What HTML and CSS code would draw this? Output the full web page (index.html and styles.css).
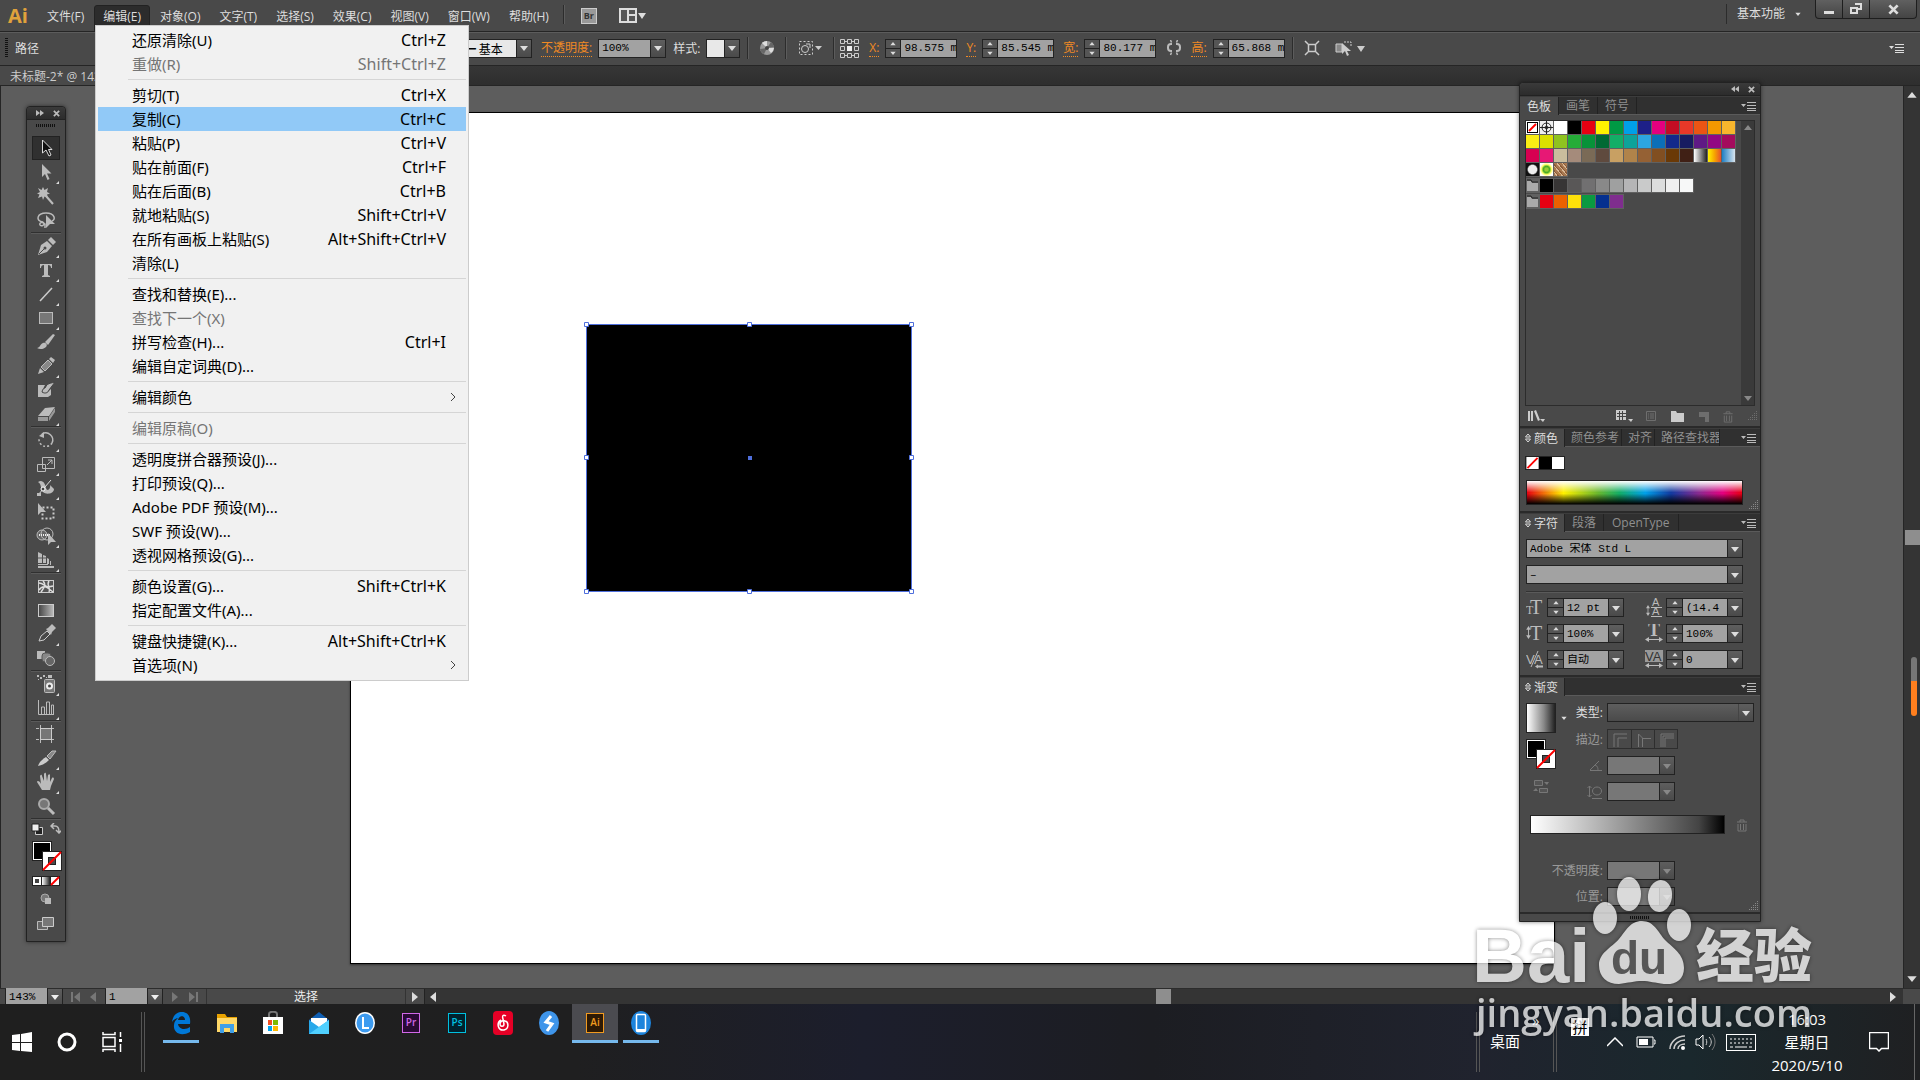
FILE: index.html
```html
<!DOCTYPE html>
<html lang="zh-CN">
<head>
    <meta charset="UTF-8">
    <meta name="viewport" content="width=device-width, initial-scale=1.0">
    <title>未标题-2 @ 143%</title>
    <link rel="stylesheet" href="styles.css">
</head>
<body>
    <svg class="sprite" aria-hidden="true">
        <symbol id="down" viewBox="0 0 8 6"><path d="M0 1h8L4 6z"/></symbol>
        <symbol id="up" viewBox="0 0 8 6"><path d="M0 5h8L4 0z"/></symbol>
        <symbol id="left" viewBox="0 0 8 10"><path d="M7 0v10L1 5z"/></symbol>
        <symbol id="right" viewBox="0 0 8 10"><path d="M1 0v10l6-5z"/></symbol>
        <symbol id="close" viewBox="0 0 8 8"><path d="M1 1l6 6M7 1L1 7" stroke="currentColor" stroke-width="2"/></symbol>
        <symbol id="flyout" viewBox="0 0 15 10"><path d="M0 3h5L2.500 6zM6 1h9v1H6zM6 4h9v1H6zM6 7h9v1H6zM6 9h9v1H6z"/></symbol>
        <symbol id="twirl" viewBox="0 0 6 10"><path d="M.5 4L3 1l2.500 3zM.5 6L3 9l2.500-3z" fill="none" stroke="currentColor"/></symbol>
        <symbol id="trash" viewBox="0 0 12 14"><path d="M1 4h10M4 4V2h4v2M2 6v7h8V6M4.500 6v6M7.500 6v6" fill="none" stroke="currentColor"/></symbol>
        <symbol id="grip" viewBox="0 0 10 10"><path d="M8 0h1v1H8zM6 2h1v1H6zM8 2h1v1H8zM4 4h1v1H4zM6 4h1v1H6zM8 4h1v1H8zM2 6h1v1H2zM4 6h1v1H4zM6 6h1v1H6zM8 6h1v1H8zM0 8h1v1H0zM2 8h1v1H2zM4 8h1v1H4zM6 8h1v1H6zM8 8h1v1H8z"/></symbol>
        <symbol id="across" viewBox="0 0 18 5"><path d="M0 2.500L4 0v2h10V0l4 2.500L14 5V3H4v2z"/></symbol>
        <symbol id="updown" viewBox="0 0 5 14"><path d="M2.500 0L5 4H3v6h2l-2.500 4L0 10h2V4H0z"/></symbol>
        <symbol id="fillstroke" viewBox="0 0 30 31">
            <rect width="20" height="20" fill="#222"/><rect x="1" y="1" width="18" height="18" fill="#fff"/><rect x="2" y="2" width="16" height="16" fill="#000"/>
            <rect x="10" y="10" width="20" height="20" fill="#222"/><rect x="11" y="11" width="18" height="18" fill="#fff"/>
            <rect x="16.500" y="16.500" width="7" height="7" fill="#494949" stroke="#222"/><path d="M11 29L29 11" stroke="#f00" stroke-width="2"/>
        </symbol>
        <symbol id="none" viewBox="0 0 13 13"><rect width="13" height="13" fill="#fff"/><path d="M1 12L12 1" stroke="#f00" stroke-width="2"/></symbol>
        <linearGradient id="gray"><stop offset="0" stop-color="#444"/><stop offset="1" stop-color="#bbb"/></linearGradient>
        <linearGradient id="white"><stop offset="0" stop-color="#fff"/><stop offset="1" stop-color="#222"/></linearGradient>
    </svg>

    <header class="menubar">
        <span class="logo">Ai</span>
        <nav class="menus">
            <button>文件(F)</button>
            <button class="open">编辑(E)</button>
            <button>对象(O)</button>
            <button>文字(T)</button>
            <button>选择(S)</button>
            <button>效果(C)</button>
            <button>视图(V)</button>
            <button>窗口(W)</button>
            <button>帮助(H)</button>
        </nav>
        <i class="divider"></i>
        <button class="bridge">Br</button>
        <button class="arrange" aria-label="排列文档">
            <svg width="28" height="16" viewBox="0 0 28 16"><path d="M1 1h16v13H1zM9 1v13M9 7h8" fill="#555" stroke="#ddd" stroke-width="2"/><path d="M19 5h8l-4 6z" fill="#ddd"/></svg>
        </button>
        <button class="workspace-name">基本功能 <svg width="6" height="4"><use href="#down"/></svg></button>
        <div class="window-buttons">
            <button aria-label="最小化"><svg width="10" height="12"><path d="M0 8h10v3H0z"/></svg></button>
            <button aria-label="还原"><svg width="12" height="12"><path d="M5 1h6v5H7M1 5h6v5H1z" fill="none" stroke="#ddd" stroke-width="2"/></svg></button>
            <button class="wide" aria-label="关闭"><svg width="11" height="11"><use href="#close"/></svg></button>
        </div>
    </header>

    <section class="control-bar">
        <div class="selection-kind"><i class="bar-grip"></i>路径</div>
        <span class="combo brush"><select aria-label="画笔定义"><option>━ 基本</option></select><svg><use href="#down"/></svg></span>
        <label class="link" for="opacity">不透明度:</label>
        <span class="combo percent"><select id="opacity"><option>100%</option></select><svg><use href="#down"/></svg></span>
        <label class="style-label" for="style">样式:</label>
        <span class="combo style"><select id="style"><option></option></select><svg><use href="#down"/></svg></span>
        <i class="divider"></i>
        <button class="icon" aria-label="重新着色图稿"><svg width="16" height="16" viewBox="0 0 16 16"><circle cx="8" cy="8" r="7" fill="#999"/><path d="M8 8L3 3A7 7 0 0 1 8 1zM8 8h7a7 7 0 0 1-3 5z" fill="#ddd"/><path d="M8 8L1 9a7 7 0 0 0 4 5zM8 8l4-6a7 7 0 0 1 3 5z" fill="#666"/><circle cx="8" cy="8" r="2" fill="#444"/></svg></button>
        <i class="divider"></i>
        <button class="icon align" aria-label="对齐"><svg width="24" height="16" viewBox="0 0 24 16"><rect x="1.500" y="1.500" width="13" height="13" fill="none" stroke="#ccc" stroke-dasharray="2 2"/><circle cx="7" cy="9" r="3.500" fill="none" stroke="#ccc"/><path d="M8 4h4v4" fill="none" stroke="#ccc"/><path d="M17 6h7l-3.500 4z" fill="#ccc"/></svg></button>
        <i class="divider"></i>
        <button class="icon ref-point" aria-label="参考点"><svg width="20" height="20" viewBox="0 0 20 20"><path d="M1.500 1.500h4v4h-4zM8.500 1.500h4v4h-4zM15.500 1.500h4v4h-4zM1.500 8.500h4v4h-4zM15.500 8.500h4v4h-4zM1.500 15.500h4v4h-4zM8.500 15.500h4v4h-4zM15.500 15.500h4v4h-4zM5 3.500h3M13 3.500h3M5 17.500h3M13 17.500h3" fill="none" stroke="#ccc"/><path d="M8 8h5v5H8z" fill="#eee"/></svg></button>
        <label class="link" for="px">X:</label>
        <span class="spin"><span class="steps"><button aria-label="增加"><svg><use href="#up"/></svg></button><button aria-label="减少"><svg><use href="#down"/></svg></button></span><input id="px" value="98.575 mm"></span>
        <label class="link" for="py">Y:</label>
        <span class="spin"><span class="steps"><button aria-label="增加"><svg><use href="#up"/></svg></button><button aria-label="减少"><svg><use href="#down"/></svg></button></span><input id="py" value="85.545 mm"></span>
        <label class="link" for="pw">宽:</label>
        <span class="spin"><span class="steps"><button aria-label="增加"><svg><use href="#up"/></svg></button><button aria-label="减少"><svg><use href="#down"/></svg></button></span><input id="pw" value="80.177 mm"></span>
        <button class="icon" aria-label="约束宽高比例"><svg width="16" height="16" viewBox="0 0 16 16"><path d="M6 4H5a3 3 0 0 0-3 3v1a3 3 0 0 0 3 3h1M10 4h1a3 3 0 0 1 3 3v1a3 3 0 0 1-3 3h-1" fill="none" stroke="#bbb" stroke-width="2"/><path d="M4.500 0l1 2.500M11.500 0l-1 2.500M4.500 15l1-2.500M11.500 15l-1-2.500" stroke="#bbb" stroke-width="1.500"/></svg></button>
        <label class="link" for="ph">高:</label>
        <span class="spin"><span class="steps"><button aria-label="增加"><svg><use href="#up"/></svg></button><button aria-label="减少"><svg><use href="#down"/></svg></button></span><input id="ph" value="65.868 mm"></span>
        <i class="divider"></i>
        <button class="icon" aria-label="隔离选中的对象"><svg width="16" height="16" viewBox="0 0 16 16"><path d="M4.500 4.500h7v7h-7zM1 1l3 3M15 1l-3 3M1 15l3-3M15 15l-3-3" fill="none" stroke="#ccc" stroke-width="1.500"/></svg></button>
        <button class="icon similar" aria-label="选择类似的对象"><svg width="30" height="16" viewBox="0 0 30 16"><path d="M1 4h6v8H1z" fill="#888" stroke="#ccc"/><path d="M9 2h7v5" fill="none" stroke="#ccc" stroke-dasharray="2 1"/><path d="M7 3v11l3-3 2 5 2-1-2-4h4z" fill="#ccc"/><path d="M22 6h8l-4 6z" fill="#ccc"/></svg></button>
        <button class="icon last" aria-label="控制面板菜单"><svg width="15" height="10"><use href="#flyout"/></svg></button>
    </section>

    <div class="doc-tabs"><a class="doc-tab" href="#">未标题-2* @ 143% (CMYK/预览)</a></div>

    <main class="workspace">
        <div class="canvas">
            <div class="artboard"></div>
            <svg class="shape" width="332" height="274" viewBox="0 0 332 274">
                <rect x="3.500" y="3.500" width="325" height="267" fill="#000" stroke="#4f6fdc"/>
                <path d="M1.500 1.500h4v4h-4zM164.500 1.500h4v4h-4zM326.500 1.500h4v4h-4zM1.500 134.500h4v4h-4zM326.500 134.500h4v4h-4zM1.500 268.500h4v4h-4zM164.500 268.500h4v4h-4zM326.500 268.500h4v4h-4z" fill="#fff" stroke="#4f6fdc"/>
                <rect x="165" y="135" width="4" height="4" fill="#4f6fdc"/>
            </svg>
        </div>
        <div class="vscroll">
            <svg width="10" height="7"><use href="#up"/></svg>
            <i class="thumb"></i>
            <svg width="10" height="7"><use href="#down"/></svg>
            <i class="edge-marker"></i>
        </div>

        <aside class="tools">
            <div class="float-head"><svg width="8" height="6" viewBox="0 0 8 6"><path d="M0 0v6l4-3zM4 0v6l4-3z"/></svg><svg width="7" height="7"><use href="#close"/></svg></div>
            <i class="dots"></i>
            <button class="tool active" aria-label="选择"><svg><path d="M6.500 2v13l3.500-3 3 6 2-1-2.500-5.500H16z" fill="#111" stroke="#ddd"/></svg></button>
            <button class="tool more" aria-label="直接选择"><svg><path d="M6 2v13l3-3 2.500 6 2-1-2.500-5.500h4.500z"/></svg></button>
            <button class="tool" aria-label="魔棒"><svg><path d="M7 1l1.500 3L12 2l-1 4 3 1.500-3 1L12 12 8.500 10.500 7 14 6 10.500 2 12l1.500-3.500L1 7.500 4 6 2 2l3.500 2z"/><path d="M10 10l7 8" stroke="#bbb" stroke-width="2"/></svg></button>
            <button class="tool" aria-label="套索"><svg><path d="M7 12c-8-1-6-9 3-9s10 7 6 8M7 12c3 3-2 5-3 3s2-4 5-1v4" fill="none" stroke="#bbb" stroke-width="1.500"/><path d="M10 5v13l4-4h5z"/></svg></button>
            <hr>
            <button class="tool more" aria-label="钢笔"><svg><path d="M2 19l3-10 6-4 5 5-5 6z"/><path d="M3 18l5-5" stroke="#494949"/><circle cx="9" cy="12" r="1.500" fill="#494949"/><path d="M12 4l3-3 5 5-3 3z"/></svg></button>
            <button class="tool more" aria-label="文字"><svg><path d="M4 4h12v4h-1c0-2-1-3-3-3v10l2 1v1H6v-1l2-1V5C6 5 5 6 5 8H4z"/></svg></button>
            <button class="tool more" aria-label="直线段"><svg><path d="M4 17L16 4" stroke="#ccc" stroke-width="1.500"/></svg></button>
            <button class="tool more" aria-label="矩形"><svg><rect x="3.500" y="4.500" width="13" height="11" fill="#777" stroke="#bbb"/></svg></button>
            <button class="tool" aria-label="画笔"><svg><path d="M1 16c3 0 3-4 6-5s5 2 3 4-6 3-9 1zM9 10l8-8 2 1-7 10z"/></svg></button>
            <button class="tool more" aria-label="铅笔"><svg><path d="M2 18l2-6 4 4z"/><path d="M5 11l7-7 4 4-7 7z" fill="#888" stroke="#bbb"/><path d="M13 3l2-2 4 3-2 3z"/></svg></button>
            <button class="tool" aria-label="斑点画笔"><svg><path d="M2 5h7l-3 6 4 2 5-4v6l-3 2H2z"/><path d="M6 12c1-5 4-3 4-6 2-3 6-3 9-4l-6 8c-1 3-4 4-7 2z" stroke="#444"/></svg></button>
            <button class="tool more" aria-label="橡皮擦"><svg><path d="M2 12l7-8 10-1-6 9z"/><path d="M2 13h10v4H2zM13 13l6-9v4l-6 9z" fill="#999"/></svg></button>
            <hr>
            <button class="tool more" aria-label="旋转"><svg><path d="M6 4a7 7 0 0 1 10 9" fill="none" stroke="#bbb" stroke-width="1.500"/><path d="M16 13a7 7 0 0 1-13-4" fill="none" stroke="#bbb" stroke-width="1.500" stroke-dasharray="2 2"/><path d="M3 6l5-4v6z"/></svg></button>
            <button class="tool more" aria-label="比例缩放"><svg><path d="M6.500 3.500h12v11h-12zM1.500 10.500h8v7h-8zM11 11l5-5M12 6h4v4" fill="none" stroke="#bbb"/></svg></button>
            <button class="tool more" aria-label="宽度"><svg><path d="M2 4c5-3 7 2 8 6s5 1 4-3l4 4c0 5-8 6-11 3S6 6 2 4z"/><path d="M2 17L15 2" stroke="#ddd"/><circle cx="7" cy="11" r="2" fill="#444" stroke="#fff"/><path d="M1 15h4v3H1z"/></svg></button>
            <button class="tool" aria-label="自由变换"><svg><rect x="6.500" y="5.500" width="11" height="11" fill="none" stroke="#ccc" stroke-width="2" stroke-dasharray="2 2"/><path d="M2 1v12l3-3h5z"/></svg></button>
            <button class="tool more" aria-label="形状生成器"><svg><circle cx="6" cy="9" r="5" fill="#666" stroke="#bbb"/><circle cx="11" cy="8" r="6" fill="none" stroke="#bbb"/><path d="M3 9h12" stroke="#eee" stroke-width="2" stroke-dasharray="1 1"/><path d="M12 7v12l3-3h5z"/></svg></button>
            <button class="tool more" aria-label="透视网格"><svg><path d="M2 2l4 2v9H2zM7 5l3 1v7H7zM2 14h10v1H2zM11 8l2 1v5h-2zM2 16h16v2H2zM14 11h1v4h-1z"/><path d="M2 8h9" stroke="#555"/></svg></button>
            <hr>
            <button class="tool" aria-label="网格"><svg><rect x="2.500" y="4.500" width="15" height="12" fill="#555" stroke="#ccc"/><path d="M3 7c6 0 5 6 14 3M3 14c4-6 8-3 14 2M7 5c4 4 0 8-2 11M13 5c-3 4 2 7 0 11" fill="none" stroke="#ddd" stroke-width="1.500"/></svg></button>
            <button class="tool" aria-label="渐变"><svg><rect x="2.500" y="4.500" width="15" height="12" fill="url(#gray)" stroke="#ccc"/></svg></button>
            <button class="tool more" aria-label="吸管"><svg><path d="M3 17l2-5 6-5 3 3-6 6z" fill="none" stroke="#ccc"/><path d="M10 5l2-1 4-4 4 4-4 4-1 3z"/></svg></button>
            <button class="tool" aria-label="混合"><svg><path d="M1 3h8v8H1z"/><rect x="6" y="5" width="9" height="9" rx="3" fill="#888" stroke="#555"/><circle cx="14" cy="13" r="4.500" fill="#666" stroke="#bbb"/></svg></button>
            <hr>
            <button class="tool more" aria-label="符号喷枪"><svg><path d="M1 1h2v2H1zM4 3h2v2H4zM7 1h2v2H7zM10 3h1v1h-1zM2 5h1v1H2zM12 1h4v3h-4z"/><rect x="8.500" y="5.500" width="10" height="13" rx="1" fill="#777" stroke="#bbb"/><circle cx="13.500" cy="12" r="2.500" fill="#444" stroke="#eee" stroke-width="2"/></svg></button>
            <button class="tool more" aria-label="柱形图"><svg><path d="M2.500 2v14.500H18M5.500 16V9h3v7M10.500 16V4h3v12M15.500 16V7h2v9" fill="none" stroke="#bbb"/></svg></button>
            <hr>
            <button class="tool" aria-label="画板"><svg><path d="M4.500 1v18M15.500 1v18M0 4.500h20M0 15.500h20" stroke="#bbb" stroke-dasharray="3 2 8 2"/><rect x="4.500" y="4.500" width="11" height="11" fill="#777" stroke="#ccc"/></svg></button>
            <button class="tool more" aria-label="切片"><svg><path d="M2 18c1-4 5-7 8-9l3 3c-3 3-6 5-11 6z" fill="#ccc"/><path d="M11 8l5-5h4l-6 8z" fill="#888" stroke="#bbb"/></svg></button>
            <button class="tool more" aria-label="抓手"><svg><path d="M6 18L1 10c0-2 3-1 4 2L4 4c1-2 2-1 2 0l2 5V2c1-2 2-1 2 0l1 7 1-6c1-1 2-1 2 0v7l2-4c1-1 2 0 2 1l-3 7-1 4z"/></svg></button>
            <button class="tool" aria-label="缩放"><svg><circle cx="8" cy="8" r="5" fill="#777" stroke="#aaa" stroke-width="2"/><path d="M12 12l6 6" stroke="#bbb" stroke-width="3"/></svg></button>
            <hr>
            <div class="swap"><svg width="12" height="12"><path d="M4.500 4.500h7v7h-7z" fill="#222" stroke="#ccc"/><path d="M1 1h7v7H1z" fill="#eee" stroke="#222"/></svg><svg width="11" height="11"><path d="M2 3h3c3 0 4 2 4 6M4 0L1 3l3 3M6 7l3 3 3-3" fill="none" stroke="#bbb" stroke-width="1.500"/></svg></div>
            <svg class="fill-box" width="30" height="31"><use href="#fillstroke"/></svg>
            <svg class="modes" width="28" height="10"><path d="M0 0h28v10H0z" fill="#222"/><path d="M1 1h8v8H1zM19 1h8v8h-8z" fill="#fff"/><path d="M3 3h4v4H3z" fill="#444"/><path d="M10 1h8v8h-8z" fill="url(#white)"/><path d="M19 9l8-8" stroke="#f00" stroke-width="2"/></svg>
            <button class="tool" aria-label="绘图模式"><svg><circle cx="9" cy="9" r="4" fill="#777" stroke="#aaa"/><path d="M9 9h6v6H9z" fill="#bbb"/></svg></button>
            <button class="tool" aria-label="更改屏幕模式"><svg><path d="M1.500 8.500h10v8h-10z" fill="#666" stroke="#bbb"/><path d="M6.500 4.500h11v9h-11z" fill="#777" stroke="#ccc"/></svg></button>
        </aside>

        <aside class="dock">
            <div class="float-head"><svg width="8" height="6" viewBox="0 0 8 6"><path d="M4 0v6L0 3zM8 0v6L4 3z"/></svg><svg width="7" height="7"><use href="#close"/></svg></div>

            <section class="panel">
                <div class="tabs"><button class="on">色板</button><button>画笔</button><button>符号</button><svg width="15" height="10"><use href="#flyout"/></svg></div>
                <div class="swatch-box">
                    <div class="swatch-list" id="swatches"></div>
                    <div class="mini-scroll"><svg width="8" height="6"><use href="#up"/></svg><svg width="8" height="6"><use href="#down"/></svg></div>
                </div>
                <div class="swatch-foot">
                    <svg class="lit" width="18" height="12"><path d="M0 1h2v10H0zM3 1h2v10H3zM6 1l2-1 4 10-2 1zM12 9h5l-2 3z"/></svg>
                    <svg class="lit push" width="17" height="12"><path d="M0 0h10v10H0z"/><path d="M1 3.500h9M1 6.500h9M3.500 1v9M6.500 1v9" stroke="#444"/><path d="M12 9h5l-2 3z"/></svg>
                    <svg width="11" height="11"><path d="M.5.500h9v9h-9zM2 3h1M4 3h4M2 5h1M4 5h4M2 7h1M4 7h4" fill="none" stroke="currentColor"/></svg>
                    <svg class="lit" width="13" height="11"><path d="M0 0h5l1 2h7v9H0z"/></svg>
                    <svg width="11" height="11"><path d="M1 1h10v10H7V6H1z"/></svg>
                    <svg width="12" height="13"><use href="#trash"/></svg>
                    <svg width="10" height="10"><use href="#grip"/></svg>
                </div>
            </section>

            <section class="panel">
                <div class="tabs tight"><button class="on"><svg width="6" height="10"><use href="#twirl"/></svg>颜色</button><button>颜色参考</button><button>对齐</button><button class="cut">路径查找器</button><svg width="15" height="10"><use href="#flyout"/></svg></div>
                <div class="color-body">
                    <div class="bw"><svg width="13" height="12"><use href="#none"/></svg><i class="black"></i><i class="white"></i></div>
                    <div class="spectrum"></div>
                    <svg class="corner" width="10" height="10"><use href="#grip"/></svg>
                </div>
            </section>

            <section class="panel">
                <div class="tabs"><button class="on twirl"><svg width="6" height="10"><use href="#twirl"/></svg>字符</button><button>段落</button><button class="roomy">OpenType</button><svg width="15" height="10"><use href="#flyout"/></svg></div>
                <div class="char-body">
                    <span class="combo full"><select aria-label="字体系列"><option>Adobe 宋体 Std L</option></select><svg><use href="#down"/></svg></span>
                    <span class="combo full"><select aria-label="字体样式"><option>–</option></select><svg><use href="#down"/></svg></span>
                    <hr>
                    <div class="char-grid">
                        <div class="char-field"><svg class="glyph"><text class="serif small" x="0" y="16">T</text><text class="serif" x="4" y="16">T</text></svg><span class="steps"><button aria-label="增加"><svg><use href="#up"/></svg></button><button aria-label="减少"><svg><use href="#down"/></svg></button></span><span class="combo"><select aria-label="字体大小"><option>12 pt</option></select><svg><use href="#down"/></svg></span></div>
                        <div class="char-field"><svg class="glyph"><use href="#updown" x="1" y="7" width="4" height="11"/><text class="sans" x="7" y="8">A</text><text class="sans" x="7" y="17">A</text><path d="M6 9h11v1H6zM6 18h11v1H6z"/></svg><span class="steps"><button aria-label="增加"><svg><use href="#up"/></svg></button><button aria-label="减少"><svg><use href="#down"/></svg></button></span><span class="combo"><select aria-label="行距"><option>(14.4</option></select><svg><use href="#down"/></svg></span></div>
                        <div class="char-field"><svg class="glyph"><use href="#updown" x="0" y="2" width="5" height="13"/><text class="serif" x="4" y="16">T</text></svg><span class="steps"><button aria-label="增加"><svg><use href="#up"/></svg></button><button aria-label="减少"><svg><use href="#down"/></svg></button></span><span class="combo"><select aria-label="垂直缩放"><option>100%</option></select><svg><use href="#down"/></svg></span></div>
                        <div class="char-field"><svg class="glyph"><text class="serif heavy" x="3" y="12">T</text><use href="#across" x="0" y="13" width="18" height="5"/></svg><span class="steps"><button aria-label="增加"><svg><use href="#up"/></svg></button><button aria-label="减少"><svg><use href="#down"/></svg></button></span><span class="combo"><select aria-label="水平缩放"><option>100%</option></select><svg><use href="#down"/></svg></span></div>
                        <div class="char-field"><svg class="glyph"><text class="sans big" x="0" y="14">V</text><text class="sans big" x="8" y="14">A</text><path d="M5 17L12 1" stroke="currentColor"/><path d="M9 16.500l3-2v1h5v2h-5v1z"/></svg><span class="steps"><button aria-label="增加"><svg><use href="#up"/></svg></button><button aria-label="减少"><svg><use href="#down"/></svg></button></span><span class="combo"><select aria-label="字距微调"><option>自动</option></select><svg><use href="#down"/></svg></span></div>
                        <div class="char-field"><svg class="glyph"><path d="M0 0h18v12H0z" fill="#999"/><text class="sans big dark" x="0" y="11">VA</text><use href="#across" x="0" y="13" width="18" height="5"/></svg><span class="steps"><button aria-label="增加"><svg><use href="#up"/></svg></button><button aria-label="减少"><svg><use href="#down"/></svg></button></span><span class="combo"><select aria-label="字距调整"><option>0</option></select><svg><use href="#down"/></svg></span></div>
                    </div>
                </div>
            </section>

            <section class="panel">
                <div class="tabs"><button class="on twirl"><svg width="6" height="10"><use href="#twirl"/></svg>渐变</button><svg width="15" height="10"><use href="#flyout"/></svg></div>
                <div class="grad-body">
                    <div class="grad-left">
                        <div class="grad-swatch"></div>
                        <svg width="30" height="31"><use href="#fillstroke"/></svg>
                        <svg class="reverse" width="16" height="14"><path d="M1.500.500h8v5h-8zM6.500 8.500h8v4h-8z" fill="#555" stroke="#777"/><path d="M11 2h5l-2 3zM0 11h5L3 8z" fill="#777"/></svg>
                    </div>
                    <svg class="grad-arrow" width="6" height="4"><use href="#down"/></svg>
                    <div class="grad-fields">
                        <label for="gtype">类型:</label><span class="combo flat"><select id="gtype"><option></option></select><svg><use href="#down"/></svg></span>
                        <span class="dim">描边:</span><div class="stroke-buttons">
                            <button disabled aria-label="在描边中应用渐变"><svg width="16" height="15"><path d="M3 15V2h13M7 15V6h9" fill="none" stroke="#777"/></svg></button>
                            <button disabled aria-label="沿描边应用渐变"><svg width="16" height="15"><path d="M3.500 15V2l4 4v9M7.500 6.500H16" fill="none" stroke="#777"/></svg></button>
                            <button disabled aria-label="跨描边应用渐变"><svg width="16" height="15"><path d="M3 15V2h13M5 15V4h11M7 15V6h9" fill="none" stroke="#777"/></svg></button>
                        </div>
                        <svg class="field-icon" width="14" height="12"><path d="M1 10.500h12M1 10l9-9M6 5c3 1 3 4 3 5" fill="none" stroke="currentColor"/></svg><span class="combo off"><select disabled aria-label="角度"><option></option></select><svg><use href="#down"/></svg></span>
                        <svg class="field-icon" width="16" height="14"><path d="M2.500 1v11M.5 3l2-2 2 2M.5 10l2 2 2-2M5 13.500h10" fill="none" stroke="currentColor"/><ellipse cx="10" cy="6" rx="4.500" ry="4" fill="none" stroke="currentColor"/></svg><span class="combo off"><select disabled aria-label="长宽比"><option></option></select><svg><use href="#down"/></svg></span>
                    </div>
                </div>
                <div class="ramp-row"><div class="ramp"></div><svg width="12" height="14"><use href="#trash"/></svg></div>
                <div class="grad-fields lower">
                    <label class="dim" for="gop">不透明度:</label><span class="combo off"><select id="gop" disabled><option></option></select><svg><use href="#down"/></svg></span>
                    <label class="dim" for="gpos">位置:</label><span class="combo off"><select id="gpos" disabled><option></option></select><svg><use href="#down"/></svg></span>
                </div>
                <svg class="corner" width="10" height="10"><use href="#grip"/></svg>
            </section>
            <div class="dock-foot"><i class="dots"></i></div>
        </aside>
    </main>

    <footer class="status">
        <span class="combo zoom"><select aria-label="缩放级别"><option>143%</option></select><svg><use href="#down"/></svg></span>
        <button disabled aria-label="首项"><svg width="9" height="10"><path d="M0 0h2v10H0zM9 0v10L3 5z"/></svg></button>
        <button disabled aria-label="上一项"><svg width="8" height="10"><use href="#left"/></svg></button>
        <span class="combo page"><select aria-label="画板导航"><option>1</option></select><svg><use href="#down"/></svg></span>
        <button disabled aria-label="下一项"><svg width="8" height="10"><use href="#right"/></svg></button>
        <button disabled aria-label="末项"><svg width="9" height="10"><path d="M7 0h2v10H7zM0 0v10l6-5z"/></svg></button>
        <span class="status-text">选择</span>
        <button class="lit" aria-label="状态菜单"><svg width="8" height="10"><use href="#right"/></svg></button>
        <div class="hscroll"><svg width="8" height="10"><use href="#left"/></svg><i class="thumb"></i><svg width="8" height="10"><use href="#right"/></svg></div>
        <i class="scroll-corner"></i>
    </footer>

    <div class="taskbar">
        <button class="sys" aria-label="开始"><svg width="20" height="20"><path d="M0 3l8-1v8H0zM9 2l11-2v10H9zM0 11h8v8l-8-1zM9 11h11v9L9 19z" fill="#fff"/></svg></button>
        <button class="sys" aria-label="Cortana"><svg width="20" height="20"><circle cx="10" cy="10" r="8" fill="none" stroke="#fff" stroke-width="3"/></svg></button>
        <button class="sys" aria-label="任务视图"><svg width="20" height="20"><path d="M1 5.500h12v9H1zM1 0v2.500h12V0M1 20v-2.500h12V20M18.500 0v5M18.500 12v8" fill="none" stroke="#fff" stroke-width="1.500"/><path d="M17 7h3v3h-3z" fill="#fff"/></svg></button>
        <i class="rails"></i>
        <nav class="apps">
            <button class="running" aria-label="Edge"><svg width="20" height="24" viewBox="0 0 20 24"><path d="M1 11C2 4 6 1 11 1c6 0 9 5 8 12H7c1 6 8 6 12 3v5C10 26 2 22 3 14c0-3 2-6 5-7C5 7 2 9 1 11zM7 9h7c0-5-6-5-7 0z" fill="#0078d7"/></svg></button>
            <button aria-label="文件资源管理器"><svg width="20" height="20"><path d="M0 1h8l2 3h10v15H0z" fill="#e8a200"/><path d="M0 5h20v14H0z" fill="#ffd868"/><path d="M3 20v-9h14v9h-4v-5H7v5z" fill="#3f9fe8"/></svg></button>
            <button aria-label="Microsoft Store"><svg width="20" height="24"><path d="M6 7V3c0-3 8-3 8 0v4" fill="none" stroke="#777" stroke-width="2"/><path d="M0 6h20v17H0z" fill="#fff"/><path d="M5 9h4v5H5z" fill="#f25022"/><path d="M10 9h5v5h-5z" fill="#7fba00"/><path d="M5 15h4v5H5z" fill="#00a4ef"/><path d="M10 15h5v5h-5z" fill="#ffb900"/></svg></button>
            <button aria-label="邮件"><svg width="20" height="22"><path d="M0 8l10-8 10 8v14H0z" fill="#0f5fb4"/><path d="M2 6h16v9H2z" fill="#fff"/><path d="M0 8l10 7 10-7v14H0z" fill="#28a8ea"/><path d="M0 22L20 8v14z" fill="#50d0ff"/></svg></button>
            <button aria-label="鲁大师"><svg width="20" height="24"><ellipse cx="10" cy="12" rx="10" ry="11" fill="#fff"/><ellipse cx="10" cy="12" rx="8.500" ry="9.500" fill="#3d9bf0"/><path d="M8 6v11h6" fill="none" stroke="#fff" stroke-width="2"/></svg></button>
            <button aria-label="Premiere"><span class="adobe pr">Pr</span></button>
            <button aria-label="Photoshop"><span class="adobe ps">Ps</span></button>
            <button aria-label="网易云音乐"><svg width="20" height="24"><rect width="20" height="24" rx="4" fill="#e60026"/><path d="M13 5c-3-2-4 0-3 3l1 5c0 3-4 3-4 0s3-4 5-3c4 1 4 8-1 9-6 1-8-7-3-10" fill="none" stroke="#fff" stroke-width="1.500"/></svg></button>
            <button aria-label="浏览器"><svg width="20" height="24"><ellipse cx="10" cy="12" rx="10" ry="12" fill="#3f95ea"/><path d="M12 5l-5 6 6 2-5 7" fill="none" stroke="#fff" stroke-width="3"/></svg></button>
            <button class="running current" aria-label="Illustrator"><span class="adobe ai">Ai</span></button>
            <button class="running" aria-label="手机助手"><svg width="20" height="24"><ellipse cx="10" cy="12" rx="10" ry="12" fill="#1d84dc"/><rect x="5.500" y="3.500" width="9" height="17" rx="1" fill="none" stroke="#fff" stroke-width="1.500"/><path d="M5 18h10v2H5z" fill="#fff"/></svg></button>
        </nav>
        <div class="tray">
            <i class="rails"></i>
            <div class="desktop-bar"><span class="chev">»</span><span>桌面</span></div>
            <i class="rails"></i>
            <span class="ime">拼</span>
            <svg width="16" height="10"><path d="M0 9l8-8 8 8" fill="none" stroke="#fff" stroke-width="1.500"/></svg>
            <svg class="battery" width="20" height="12"><path d="M1 1h16v10H1zM18 4h1v4h-1" fill="none" stroke="#fff"/><path d="M3 3h9v6H3z" fill="#fff"/></svg>
            <svg class="wifi" width="16" height="15"><path d="M1 14C1 7 8 1 16 1M5 14c0-5 5-9 11-9M9 14c0-3 3-5 7-5" fill="none" stroke="#ccc" stroke-width="1.500"/><circle cx="14" cy="13" r="2" fill="#fff"/></svg>
            <svg class="sound" width="21" height="18"><path d="M1 6h3l4-4v14l-4-4H1z" fill="none" stroke="#fff"/><path d="M11 6c1 2 1 4 0 6M14 4c3 3 3 7 0 10" fill="none" stroke="#ccc"/><path d="M17 1c4 5 4 11 0 16" fill="none" stroke="#777"/></svg>
            <svg width="30" height="17"><rect x=".5" y=".5" width="29" height="16" fill="none" stroke="#fff"/><path d="M4 5h22M4 9h22" stroke="#fff" stroke-dasharray="2 2"/><path d="M4 13h3M9 13h12M23 13h3" stroke="#fff"/></svg>
            <time class="clock">16:03<br>星期日<br>2020/5/10</time>
            <svg class="note" width="20" height="20"><path d="M.5.500h19v16h-7L10 19l-2.500-2.500h-7z" fill="none" stroke="#fff" stroke-width="1.500"/></svg>
            <i class="peek"></i>
        </div>
    </div>

    <svg class="watermark" width="350" height="170" viewBox="0 0 350 170">
        <text class="wm-latin" x="2" y="112">Bai</text>
        <ellipse cx="135" cy="48" rx="12" ry="16"/>
        <ellipse cx="159" cy="24" rx="12" ry="17"/>
        <ellipse cx="190" cy="26" rx="12" ry="16" transform="rotate(8 190 26)"/>
        <ellipse cx="209" cy="55" rx="12" ry="16"/>
        <path d="M172 51c12 0 16 11 23 19 8 8 19 14 19 28 0 12-9 17-20 16-9-1-14-3-22-3s-14 2-23 3c-12 0-20-7-20-19s12-17 20-26c7-8 11-18 23-18z"/>
        <text class="wm-du" x="141" y="104">du</text>
        <text class="wm-cjk" x="226" y="107">经验</text>
        <text class="wm-url" x="6" y="157">jingyan.baidu.com</text>
    </svg>

    <div class="dropdown" role="menu">
        <button>还原清除(U)<kbd>Ctrl+Z</kbd></button>
        <button disabled>重做(R)<kbd>Shift+Ctrl+Z</kbd></button>
        <hr>
        <button>剪切(T)<kbd>Ctrl+X</kbd></button>
        <button class="hot">复制(C)<kbd>Ctrl+C</kbd></button>
        <button>粘贴(P)<kbd>Ctrl+V</kbd></button>
        <button>贴在前面(F)<kbd>Ctrl+F</kbd></button>
        <button>贴在后面(B)<kbd>Ctrl+B</kbd></button>
        <button>就地粘贴(S)<kbd>Shift+Ctrl+V</kbd></button>
        <button>在所有画板上粘贴(S)<kbd>Alt+Shift+Ctrl+V</kbd></button>
        <button>清除(L)</button>
        <hr>
        <button>查找和替换(E)...</button>
        <button disabled>查找下一个(X)</button>
        <button>拼写检查(H)...<kbd>Ctrl+I</kbd></button>
        <button>编辑自定词典(D)...</button>
        <hr>
        <button class="sub">编辑颜色<svg width="6" height="10"><path d="M1 1l4 4-4 4"/></svg></button>
        <hr>
        <button disabled>编辑原稿(O)</button>
        <hr>
        <button>透明度拼合器预设(J)...</button>
        <button>打印预设(Q)...</button>
        <button>Adobe PDF 预设(M)...</button>
        <button>SWF 预设(W)...</button>
        <button>透视网格预设(G)...</button>
        <hr>
        <button>颜色设置(G)...<kbd>Shift+Ctrl+K</kbd></button>
        <button>指定配置文件(A)...</button>
        <hr>
        <button>键盘快捷键(K)...<kbd>Alt+Shift+Ctrl+K</kbd></button>
        <button class="sub">首选项(N)<svg width="6" height="10"><path d="M1 1l4 4-4 4"/></svg></button>
    </div>

    <script>
        const noneIcon = '<svg width="13" height="13"><rect width="13" height="13" fill="#fff"/><rect x="1.500" y="1.500" width="10" height="10" fill="#fff" stroke="#000"/><path d="M3 10L10 3" stroke="#f00" stroke-width="2"/></svg>';
        const regIcon = '<svg width="13" height="13"><rect width="13" height="13" fill="#eee"/><circle cx="6.500" cy="6.500" r="4.500" fill="none" stroke="#222"/><circle cx="6.500" cy="6.500" r="1.500" fill="none" stroke="#222"/><path d="M6.500 0v13M0 6.500h13" stroke="#222"/></svg>';
        const folderIcon = '<svg width="13" height="13"><path d="M1 2h4l1 2h6v8H1z" fill="#aaa"/><path d="M1 1h4l1 2h6" fill="none" stroke="#222"/></svg>';

        const rows = [
            [noneIcon, regIcon, '#fff', '#000', '#e60012', '#fff100', '#009944', '#00a0e9', '#1d2088', '#e4007f', '#c30d23', '#e83828', '#ea5514', '#f39800', '#f8b62d'],
            ['#f9ed14', '#dbe000', '#8fc31f', '#25ac38', '#079239', '#006934', '#13ae67', '#0da39a', '#2ca6e0', '#0b6fb8', '#13298b', '#171c61', '#5f1985', '#920783', '#a40b5d'],
            ['#d70051', '#e71875', '#cabd9d', '#a58b7b', '#7a6a56', '#5f4a3e', '#c8a063', '#b0834a', '#956134', '#814f21', '#6a3906', '#402015', 'linear-gradient(90deg, #fff, #222)', 'linear-gradient(90deg, #fff100, #f6a500, #e8502a)', 'linear-gradient(90deg, #1d7fc4, #d8e4ee)'],
            ['radial-gradient(circle, #eee 45%, #111 60%)', 'radial-gradient(circle, #9c3 15%, #4a2 35%, #ff6 55%, #fff 75%)', 'repeating-linear-gradient(50deg, #a87850 0 2px, #d9b896 2px 3px, #8a5a38 3px 4px)']
        ];
        const groups = [
            [folderIcon, '#000', '#373535', '#595757', '#717071', '#898989', '#9fa0a0', '#b5b5b6', '#c9caca', '#dcdddd', '#efefef', '#f7f8f8'],
            [folderIcon, '#e60012', '#eb6100', '#fde00a', '#0a9a41', '#05308f', '#7f2d8e']
        ];

        function addRow(cells, cls) {
            const row = document.createElement('div');
            row.className = cls;
            for (const c of cells) {
                const b = document.createElement('button');
                b.setAttribute('aria-label', '色板');
                if (c.startsWith('<svg')) b.innerHTML = c;
                else b.style.background = c;
                row.appendChild(b);
            }
            document.getElementById('swatches').appendChild(row);
        }
        rows.forEach(r => addRow(r, 'swatch-row'));
        groups.forEach(r => addRow(r, 'swatch-row group'));
    </script>
</body>
</html>
```

FILE: styles.css
```css
*{
    box-sizing:border-box;
}
body{
    margin:0;
    height:100vh;
    display:flex;
    flex-direction:column;
    overflow:hidden;
    position:relative;
    background:#5d5d5d;
    color:#ddd;
    font-family:"Open Sans","Noto Sans CJK SC",sans-serif;
    font-size:12px;
}
button,input,select{
    font:inherit;
    color:inherit;
    border:0;
    padding:0;
    margin:0;
    background:none;
    border-radius:0;
    appearance:none;
    outline:0;
}
svg{
    display:block;
    flex:none;
    fill:currentColor;
}
.sprite{
    position:absolute;
    width:0;
    height:0;
}
.divider{
    width:2px;
    border-left:1px solid #2c2c2c;
    border-right:1px solid #5c5c5c;
    align-self:stretch;
    margin:4px 0;
}

/* menu bar */
.menubar{
    display:flex;
    height:32px;
    flex:none;
    align-items:center;
    background:#494949;
    border-bottom:1px solid #252525;
}
.logo{
    font-family:"Open Sans",sans-serif;
    font-weight:700;
    font-size:20px;
    line-height:28px;
    color:#e0a23c;
    width:38px;
    padding-left:8px;
}
.menus{
    display:flex;
    gap:1px;
    height:26px;
    align-self:flex-end;
}
.menus button{
    padding:0 8px 2px;
    line-height:20px;
    border:1px solid transparent;
}
.menus .open{
    background:#2c2c2c;
    border-color:#222;
    border-radius:3px 3px 0 0;
}
.menubar .divider{
    margin:5px 16px 7px 5px;
}
.bridge{
    width:16px;
    height:16px;
    background:#999;
    border:1px solid #ccc;
    color:#333;
    font-size:9px;
    font-weight:700;
    line-height:14px;
}
.arrange{
    margin-left:22px;
}
.workspace-name{
    display:flex;
    align-items:center;
    gap:10px;
    margin-left:auto;
    margin-right:14px;
    padding-left:10px;
    border-left:1px solid #2c2c2c;
    line-height:20px;
    margin-bottom:3px;
}
.window-buttons{
    display:flex;
    align-self:flex-start;
    height:19px;
    margin-right:3px;
    border:1px solid #1e1e1e;
    border-top:0;
    border-radius:0 0 4px 4px;
    background:linear-gradient(#606060,#444);
}
.window-buttons button{
    width:27px;
    display:flex;
    align-items:center;
    justify-content:center;
    border-right:1px solid #1e1e1e;
}
.window-buttons .wide{
    width:46px;
    border:0;
}

/* control bar */
.control-bar{
    display:flex;
    flex:none;
    height:34px;
    align-items:center;
    padding-bottom:2px;
    background:#494949;
    border-top:1px solid #5c5c5c;
    border-bottom:1px solid #252525;
}
.selection-kind{
    display:flex;
    align-items:center;
    gap:7px;
    width:460px;
    padding-left:5px;
}
.bar-grip{
    width:3px;
    height:20px;
    background:repeating-linear-gradient(#111 0 1px,#494949 1px 2px);
}
.combo{
    display:flex;
    align-items:center;
    height:19px;
    border:1px solid #222;
    background:linear-gradient(#5e5e5e,#4a4a4a);
}
.combo select{
    flex:1;
    min-width:0;
    height:17px;
    padding:0 3px;
    background:#a2a2a2;
    border-right:1px solid #222;
    color:#000;
    opacity:1;
    font-family:"Liberation Mono","Noto Sans CJK SC",monospace;
    font-size:11px;
}
.combo svg{
    width:8px;
    height:6px;
    margin:0 3px;
}
.brush{
    width:72px;
}
.brush select{
    background:#e8e8e8;
    font-family:"Noto Sans CJK SC",sans-serif;
    font-size:12px;
}
.link{
    color:#f08a24;
    border-bottom:1px dotted #f08a24;
    line-height:16px;
    margin:0 6px 0 9px;
}
.percent{
    width:68px;
}
.style-label{
    margin:0 6px 0 7px;
}
.style{
    width:34px;
    margin-right:7px;
}
.style select{
    background:#e8e8e8;
}
.icon{
    margin:0 10px;
}
.align{
    margin:0 11px;
}
.ref-point{
    margin:0 11px 0 4px;
}
.control-bar .icon + .link{
    margin-left:-1px;
}
.spin{
    display:flex;
    height:19px;
    width:72px;
    border:1px solid #222;
}
.spin + .divider{
    margin-left:7px;
}
.spin input{
    flex:1;
    min-width:0;
    padding-left:3px;
    background:#a2a2a2;
    color:#000;
    font-family:"Liberation Mono",monospace;
    font-size:11px;
}
.steps{
    display:flex;
    flex-direction:column;
    width:15px;
    border-right:1px solid #222;
}
.steps button{
    flex:1;
    display:flex;
    align-items:center;
    justify-content:center;
    background:#555;
}
.steps button + button{
    border-top:1px solid #222;
}
.steps svg{
    width:6px;
    height:4px;
}
.similar{
    margin:0 5px;
}
.last{
    margin-left:auto;
    margin-right:16px;
}

/* document tab strip */
.doc-tabs{
    display:flex;
    flex:none;
    height:20px;
    background:linear-gradient(#363636,#2e2e2e);
    border-bottom:1px solid #252525;
}
.doc-tab{
    padding:0 10px;
    background:#494949;
    color:#ccc;
    text-decoration:none;
    line-height:22px;
}

/* canvas */
.workspace{
    flex:1;
    min-height:0;
    display:flex;
    position:relative;
}
.canvas{
    flex:1;
    position:relative;
    overflow:hidden;
    border-left:1px solid #252525;
}
.artboard{
    position:absolute;
    left:349px;
    top:26px;
    width:1205px;
    height:852px;
    background:#fff;
    border:1px solid #000;
    box-shadow:0 1px 2px #333;
}
.shape{
    position:absolute;
    left:582px;
    top:235px;
}
.vscroll{
    width:17px;
    display:flex;
    flex-direction:column;
    align-items:center;
    justify-content:space-between;
    padding:6px 0;
    background:#343434;
    border-left:1px solid #252525;
    position:relative;
}
.thumb{
    width:15px;
    height:15px;
    background:#8e8e8e;
}
.edge-marker{
    position:absolute;
    right:3px;
    top:571px;
    width:6px;
    height:59px;
    border-radius:3px;
    background:linear-gradient(#777 24px,#ff7f1e 24px);
}

/* floating panels */
.tools,.dock{
    position:absolute;
    background:#494949;
    border:1px solid #222;
    border-radius:4px 4px 0 0;
    box-shadow:0 0 4px rgba(0,0,0,.5);
}
.float-head{
    display:flex;
    align-items:center;
    justify-content:flex-end;
    height:13px;
    gap:9px;
    padding:0 5px;
    background:linear-gradient(#3a3a3a,#2c2c2c);
    border-bottom:1px solid #222;
    border-radius:4px 4px 0 0;
    color:#bbb;
}
.dots{
    display:block;
    width:20px;
    height:3px;
    margin:0 auto;
    background:repeating-linear-gradient(90deg,#111 0 1px,#494949 1px 2px);
}
.tools{
    left:26px;
    top:20px;
    width:40px;
    padding-bottom:6px;
}
.tools > .dots{
    margin:4px auto 9px;
}
.tool{
    display:flex;
    align-items:center;
    justify-content:center;
    width:28px;
    height:24px;
    margin:0 5px;
    position:relative;
    color:#bbb;
}
.tool svg{
    width:20px;
    height:20px;
    overflow:visible;
}
.tool.active{
    background:#303030;
    border:1px solid #222;
}
.more::after{
    content:"";
    position:absolute;
    right:1px;
    bottom:0;
    border-left:3px solid transparent;
    border-bottom:3px solid #ddd;
}
.tools hr{
    height:2px;
    margin:0 4px;
    border:0;
    border-top:1px solid #303030;
    background:#5a5a5a;
}
.swap{
    display:flex;
    justify-content:space-between;
    padding:3px 4px 6px;
}
.fill-box{
    margin-left:5px;
}
.modes{
    margin:4px 5px 1px;
}

.dock{
    right:159px;
    top:-4px;
    width:242px;
}
.panel{
    border-bottom:2px solid #2a2a2a;
    position:relative;
}
.tabs{
    display:flex;
    height:19px;
    background:#303030;
    border-bottom:1px solid #5a5a5a;
    border-top:1px solid #3c3c3c;
}
.tabs button{
    display:flex;
    align-items:center;
    gap:3px;
    padding:0 7px;
    color:#8f8f8f;
    line-height:17px;
    white-space:nowrap;
    border-right:1px solid #222;
}
.tabs .on{
    background:#494949;
    color:#ddd;
    margin-bottom:-1px;
}
.tabs > svg{
    margin:4px 4px 0 auto;
    color:#bbb;
}
.tabs.tight button{
    padding:0 2px 0 6px;
}
.tabs.tight .on,.tabs .twirl{
    padding:0 6px 0 5px;
}
.tabs.tight .cut{
    width:65px;
    overflow:hidden;
}
.tabs .roomy{
    padding:0 8px;
}
.swatch-box{
    display:flex;
    height:286px;
    margin:5px 5px 0;
    border:1px solid #2c2c2c;
}
.swatch-list{
    flex:1;
}
.swatch-row{
    display:flex;
    gap:1px;
    width:max-content;
    padding:0 1px 1px 0;
    background:#606060;
}
.swatch-row.group{
    margin-top:1px;
    padding-top:1px;
}
.swatch-row button{
    width:13px;
    height:13px;
}
.mini-scroll{
    width:13px;
    display:flex;
    flex-direction:column;
    justify-content:space-between;
    align-items:center;
    padding:4px 0;
    background:#3a3a3a;
    color:#888;
}
.swatch-foot{
    display:flex;
    align-items:center;
    justify-content:space-between;
    height:20px;
    padding:0 2px 0 8px;
    color:#6e6e6e;
}
.swatch-foot .lit{
    color:#ccc;
}
.swatch-foot .push{
    margin-left:56px;
}
.color-body{
    padding:9px 5px 6px;
}
.bw{
    display:flex;
    width:40px;
    height:14px;
    border:1px solid #222;
}
.black,.white{
    flex:1;
    background:#000;
}
.white{
    background:#fff;
}
.spectrum{
    height:25px;
    margin:10px 12px 0 1px;
    border:1px solid #222;
    background:linear-gradient(#fff,rgba(255,255,255,0) 50%,rgba(0,0,0,0) 55%,#000),linear-gradient(90deg,#e60012,#fff100 17%,#6ab82e 33%,#13ae67 43%,#00a0e9 55%,#123aa0 67%,#8a2a90 80%,#e4007f 91%,#e60012);
}
.corner{
    position:absolute;
    right:1px;
    bottom:1px;
    color:#888;
}
.char-body{
    padding:7px 17px 6px 6px;
}
.full{
    margin-bottom:7px;
}
.char-body hr{
    margin:0 0 5px;
    border:0;
    border-top:1px solid #333;
    border-bottom:1px solid #5a5a5a;
}
.char-grid{
    display:grid;
    grid-template-columns:98px 98px;
    justify-content:space-between;
    gap:7px;
}
.char-field{
    display:flex;
    height:19px;
}
.char-field .steps{
    width:16px;
    border:1px solid #222;
    border-right:0;
}
.char-field .combo{
    flex:1;
    min-width:0;
}
.glyph{
    width:21px;
    height:19px;
    color:#bbb;
}
.serif{
    font-family:"Liberation Serif",serif;
    font-size:20px;
}
.serif.small{
    font-size:12px;
}
.serif.heavy{
    font-size:18px;
    font-weight:700;
}
.sans{
    font-family:"Liberation Sans",sans-serif;
    font-size:11px;
}
.sans.big{
    font-size:13px;
}
.dark{
    fill:#333;
}
.grad-body{
    display:flex;
    padding:7px 6px 0;
}
.grad-left{
    width:30px;
    display:flex;
    flex-direction:column;
    gap:6px;
}
.grad-swatch{
    height:30px;
    border:1px solid #222;
    background:linear-gradient(90deg,#fff,#888 60%,#222);
}
.reverse{
    margin:4px 0 0 7px;
}
.grad-arrow{
    margin:13px 3px 0 5px;
}
.grad-fields{
    flex:1;
    display:grid;
    grid-template-columns:33px 1fr;
    gap:7px 4px;
    align-items:center;
    justify-items:end;
    white-space:nowrap;
    line-height:19px;
}
.dim{
    color:#999;
}
.grad-fields .combo,.stroke-buttons{
    justify-self:start;
}
.grad-fields .flat{
    width:100%;
}
.flat select{
    background:none;
    border-color:#444;
}
.off{
    width:68px;
    color:#888;
}
.off select{
    background:#777;
}
.field-icon{
    color:#777;
}
.stroke-buttons{
    display:flex;
    height:20px;
    border:1px solid #2e2e2e;
}
.stroke-buttons button{
    width:23px;
    padding-left:3px;
}
.stroke-buttons button + button{
    border-left:1px solid #2e2e2e;
}
.ramp-row{
    display:flex;
    align-items:center;
    justify-content:space-between;
    padding:14px 12px 0 10px;
    color:#777;
}
.ramp{
    width:195px;
    height:19px;
    border:1px solid #222;
    background:linear-gradient(90deg,#fff,#888 55%,#444 87%,#000);
}
.grad-fields.lower{
    grid-template-columns:77px 1fr;
    padding:27px 6px 6px;
}
.dock-foot{
    height:7px;
    padding-top:2px;
}

/* status row */
.status{
    display:flex;
    flex:none;
    height:16px;
    align-items:center;
    padding-left:5px;
    background:#494949;
    border-top:1px solid #2c2c2c;
    color:#eee;
}
.status > button{
    display:flex;
    justify-content:center;
    width:18px;
    color:#777;
}
.status > button.lit{
    color:#ddd;
}
.status .combo{
    height:16px;
    border-bottom:0;
    border-top:0;
}
.zoom,.page{
    width:58px;
    margin-right:3px;
}
.page{
    margin-left:3px;
}
.status-text{
    width:200px;
    margin-left:4px;
    text-align:center;
    line-height:15px;
    border-left:1px solid #333;
    border-right:1px solid #333;
}
.hscroll{
    flex:1;
    height:15px;
    display:flex;
    align-items:center;
    justify-content:space-between;
    padding:0 6px 0 4px;
    background:#343434;
    border-left:1px solid #222;
    color:#ddd;
}
.scroll-corner{
    width:17px;
}

/* taskbar */
.taskbar{
    display:flex;
    flex:none;
    height:76px;
    align-items:center;
    background:linear-gradient(90deg,#1f1f1f 0,#1f1f20 30%,#1c1e2c 45%,#1c1d22 60%,#20232e 77%,#1a282d 88%,#1f2022);
    color:#fff;
    font-size:15px;
}
.sys{
    width:45px;
    height:40px;
    padding-left:12px;
}
.rails{
    width:4px;
    height:60px;
    border-left:1px solid #555;
    border-right:1px solid #555;
}
.taskbar > .rails{
    margin-left:6px;
}
.apps{
    display:flex;
    align-self:flex-start;
    margin-left:13px;
}
.apps button{
    width:36px;
    height:39px;
    margin:0 5px;
    display:flex;
    align-items:center;
    justify-content:center;
    border-bottom:3px solid transparent;
    padding-top:2px;
}
.apps .running{
    border-bottom-color:#76b9ed;
}
.apps .current{
    width:46px;
    margin:0;
    background:#4b4b50 padding-box;
}
.adobe{
    width:18px;
    height:20px;
    border:1px solid;
    font-size:10px;
    font-weight:600;
    line-height:17px;
}
.pr{
    color:#d167e8;
    background:#2a0a35;
}
.ps{
    color:#00c0e0;
    background:#00222e;
}
.ai{
    color:#f29a1f;
    background:#2e1a05;
}
.tray{
    display:flex;
    align-items:center;
    margin-left:auto;
    height:76px;
}
.desktop-bar{
    display:flex;
    flex-direction:column;
    width:73px;
    padding-left:10px;
    line-height:22px;
    margin-bottom:22px;
}
.chev{
    margin-left:42px;
    line-height:20px;
}
.ime{
    align-self:flex-start;
    margin:14px 18px 0 14px;
    width:18px;
    height:18px;
    background:#fff;
    color:#000;
    text-align:center;
    line-height:18px;
}
.battery,.wifi{
    margin-left:13px;
}
.sound{
    margin:0 10px;
}
.clock{
    width:102px;
    text-align:center;
    line-height:23px;
}
.note{
    margin:0 25px 0 11px;
}
.peek{
    width:6px;
    height:76px;
    border-left:1px solid #666;
}

/* watermark */
.watermark{
    position:absolute;
    right:100px;
    bottom:40px;
    fill:#fff;
    opacity:.73;
    filter:drop-shadow(0 0 2px rgba(0,0,0,.6));
    pointer-events:none;
}
.wm-latin{
    font:700 76px "Liberation Sans",sans-serif;
}
.wm-du{
    font:700 46px "Liberation Sans",sans-serif;
    fill:#555;
}
.wm-cjk{
    font:900 58px "Noto Sans CJK SC",sans-serif;
}
.wm-url{
    font:600 38px "Open Sans",sans-serif;
}

/* edit menu */
.dropdown{
    position:absolute;
    left:95px;
    top:25px;
    width:374px;
    padding:2px 2px 3px;
    background:#f1f1f1;
    border:1px solid #ccc;
    color:#000;
    font-family:"Noto Sans","Noto Sans CJK SC",sans-serif;
    font-size:15px;
}
.dropdown button{
    display:flex;
    align-items:center;
    justify-content:space-between;
    width:100%;
    height:24px;
    padding:0 20px 0 34px;
    line-height:24px;
}
.dropdown button:disabled{
    color:#757575;
}
.dropdown .hot{
    background:#91c9f7;
}
.dropdown kbd{
    font-family:inherit;
    font-size:16px;
}
.dropdown .sub{
    padding-right:10px;
}
.dropdown .sub svg{
    fill:none;
    stroke:#444;
}
.dropdown hr{
    margin:3px 0 3px 30px;
    border:0;
    border-top:1px solid #d5d5d5;
}
```
